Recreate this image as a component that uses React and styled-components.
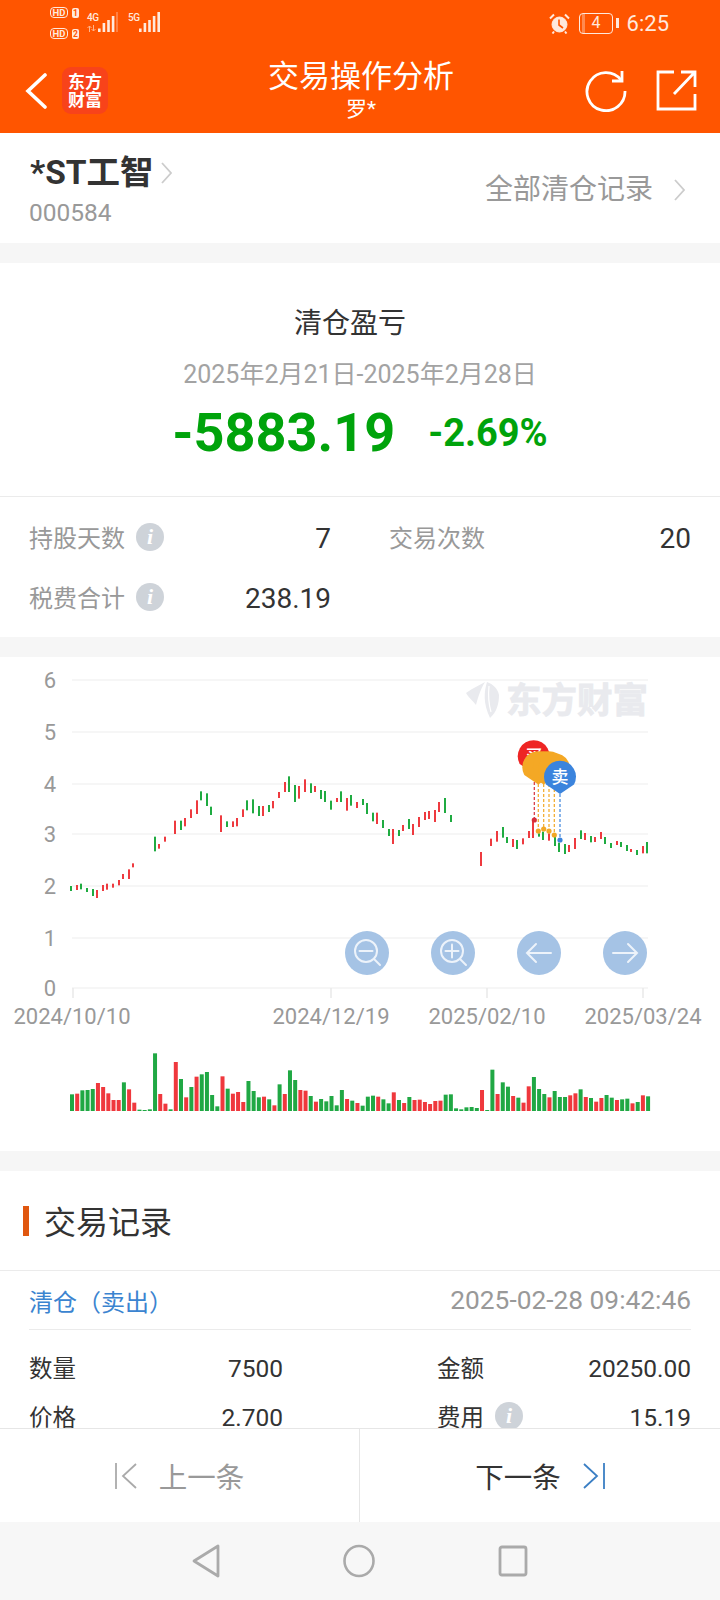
import styled, { createGlobalStyle } from 'styled-components'

const GlobalStyle = createGlobalStyle`
  html, body { margin: 0; padding: 0; background: #fff; }
  * { box-sizing: border-box; }
  body { font-family: Roboto, "Noto Sans CJK SC", sans-serif; }
`

const Page = styled.div`
  width: 720px;
  height: 1600px;
  display: flex;
  flex-direction: column;
  overflow: hidden;
  background: #fff;
`

/* header */
const Header = styled.header`
  height: 133px;
  flex: none;
  background: #ff5500;
  color: #fff;
`
const StatusBar = styled.div`
  height: 48px;
  padding: 7px 51px 0 50px;
  display: flex;
  justify-content: space-between;
  align-items: flex-start;
  color: #ffe9dd;
`
const StatusLeft = styled.div`
  display: flex;
  align-items: flex-start;
  gap: 8px;
`
const SimStack = styled.div`
  display: flex;
  flex-direction: column;
  gap: 10px;
`
const SimRow = styled.div`
  display: flex;
  align-items: center;
  gap: 4px;
`
const HdBadge = styled.span`
  width: 18px;
  height: 11px;
  border: 1px solid #ffe9dd;
  border-radius: 4px;
  font-size: 9.5px;
  font-weight: 700;
  line-height: 9px;
  text-align: center;
`
const SimNumber = styled.span`
  width: 7px;
  height: 10px;
  border-radius: 2px;
  background: #ffe9dd;
  color: #ff5500;
  font-size: 8.5px;
  font-weight: 700;
  line-height: 10px;
  text-align: center;
`
const Network = styled.div`
  display: flex;
  align-items: flex-end;
  height: 25px;
`
const NetStack = styled.div`
  width: 11px;
  height: 25px;
  padding-top: 6px;
  display: flex;
  flex-direction: column;
  justify-content: space-between;
`
const NetLabel = styled.span`
  font-size: 10px;
  font-weight: 500;
  line-height: 9px;
  letter-spacing: -0.5px;
`
const StatusRight = styled.div`
  display: flex;
  align-items: center;
  margin-top: 5px;
  height: 22px;
`
const Battery = styled.span`
  width: 34px;
  height: 21px;
  margin-left: 9px;
  border: 1.5px solid #ffe9dd;
  border-radius: 4px;
  background: linear-gradient(to right, transparent 2px, #ff8a50 2px, #ff8a50 5px, transparent 5px);
  font-size: 16px;
  line-height: 18px;
  text-align: center;
`
const BatteryNub = styled.span`
  width: 2.5px;
  height: 10px;
  margin-left: 3px;
  background: #ffe9dd;
`
const Clock = styled.span`
  margin-left: 8px;
  font-size: 22px;
`
const NavBar = styled.div`
  height: 85px;
  padding: 0 23px 0 25px;
  display: grid;
  grid-template-columns: 1fr auto 1fr;
  align-items: center;
`
const NavLeft = styled.div`
  display: flex;
  align-items: center;
  gap: 14px;
`
const Logo = styled.div`
  width: 46px;
  height: 47px;
  border-radius: 9px;
  background: #f8431a;
  font-size: 17px;
  font-weight: 700;
  line-height: 18px;
  padding-top: 6px;
  text-align: center;
`
const TitleStack = styled.div`
  display: flex;
  flex-direction: column;
  align-items: center;
  padding-bottom: 2px;
`
const Title = styled.div`
  font-size: 31px;
  line-height: 38px;
`
const SubTitle = styled.div`
  margin-top: 1px;
  font-size: 21px;
  line-height: 24px;
`
const NavRight = styled.div`
  display: flex;
  justify-content: flex-end;
  align-items: center;
  gap: 29px;
`

/* scrolling body */
const Main = styled.main`
  flex: 1;
  min-height: 0;
  overflow: hidden;
  background: #f6f6f6;
  display: flex;
  flex-direction: column;
  gap: 20px;
`
const Card = styled.section`
  background: #fff;
  flex: none;
`
const StockCard = styled(Card)`
  height: 110px;
  padding: 20px 35px 0 30px;
  display: flex;
  justify-content: space-between;
  align-items: flex-start;
`
const StockName = styled.div`
  display: flex;
  align-items: center;
  gap: 7px;
  font-size: 33.5px;
  font-weight: 700;
  line-height: 40px;
  color: #333;
`
const StockCode = styled.div`
  margin-top: 5px;
  margin-left: -1px;
  font-size: 24.5px;
  line-height: 30px;
  color: #999;
`
const AllRecords = styled.div`
  display: flex;
  align-items: center;
  gap: 21px;
  margin-top: 18px;
  font-size: 28px;
  line-height: 38px;
  color: #999;
`
const Summary = styled.div`
  height: 234px;
  padding-top: 43px;
  display: flex;
  flex-direction: column;
  align-items: center;
  border-bottom: 1px solid #ebebeb;
`
const SummaryTitle = styled.div`
  margin-right: 20px;
  font-size: 28px;
  line-height: 36px;
  color: #333;
`
const SummaryDate = styled.div`
  margin-top: 17px;
  font-size: 25px;
  line-height: 32px;
  color: #a3a3a3;
`
const ProfitRow = styled.div`
  display: flex;
  align-items: center;
  gap: 33px;
  margin-top: 12px;
  color: #00a30b;
  font-weight: 700;
  line-height: 60px;
`
const ProfitMain = styled.span`
  font-size: 54px;
`
const ProfitRate = styled.span`
  font-size: 38px;
`
const StatGrid = styled.div`
  height: 140px;
  padding: 11px 29px 9px;
  display: grid;
  grid-template-columns: 302px 302px;
  grid-auto-rows: 60px;
  column-gap: 58px;
`
const Stat = styled.div`
  display: flex;
  align-items: center;
  justify-content: space-between;
`
const StatLabel = styled.span`
  display: flex;
  align-items: center;
  gap: 11px;
  padding-bottom: 3px;
  font-size: 24px;
  color: #999;
`
const StatValue = styled.span`
  font-size: 28px;
  color: #333;
`
const InfoDot = styled.i`
  width: 28px;
  height: 28px;
  border-radius: 50%;
  background: #ced3d9;
  color: #fff;
  font-family: "Liberation Serif", serif;
  font-size: 22px;
  font-weight: 700;
  font-style: italic;
  line-height: 28px;
  text-align: center;
`

/* chart */
const ChartCard = styled(Card)`
  position: relative;
  height: 494px;
`
const ChartSvg = styled.svg`
  display: block;
`
const AxisText = styled.text`
  font-family: Roboto, sans-serif;
  font-size: 22px;
  fill: #999;
  text-anchor: middle;
`
const Watermark = styled.text`
  font-family: "Noto Sans CJK SC", sans-serif;
  font-size: 35.5px;
  font-weight: 700;
  fill: #e9eaee;
  stroke: #e9eaee;
  stroke-width: 0.8px;
`
const PinText = styled.text`
  font-family: "Noto Sans CJK SC", sans-serif;
  font-size: 17px;
  font-weight: 500;
  fill: #fff;
  text-anchor: middle;
`
const ChartControls = styled.div`
  position: absolute;
  left: 345px;
  top: 274px;
  display: flex;
  gap: 42px;
`
const RoundButton = styled.button`
  width: 44px;
  height: 44px;
  padding: 0;
  border: none;
  border-radius: 50%;
  background: #a5c3e5;
  display: flex;
  align-items: center;
  justify-content: center;
`

/* records */
const RecordsCard = styled(Card)`
  flex: 1;
  min-height: 0;
  overflow: hidden;
`
const SectionHead = styled.div`
  height: 100px;
  padding: 35px 0 0 23px;
  display: flex;
  align-items: flex-start;
  gap: 15px;
  border-bottom: 1px solid #ebebeb;
`
const AccentBar = styled.span`
  width: 6px;
  height: 30px;
  background: #e0570f;
`
const SectionTitle = styled.div`
  margin-top: 2px;
  font-size: 32px;
  line-height: 30px;
  color: #333;
`
const RecordBody = styled.div`
  padding: 0 29px;
`
const RecordHead = styled.div`
  height: 59px;
  display: flex;
  justify-content: space-between;
  align-items: center;
  border-bottom: 1px solid #ebebeb;
`
const RecordKind = styled.span`
  font-size: 24px;
  color: #3b84d0;
`
const RecordTime = styled.span`
  font-size: 26.3px;
  color: #999;
`
const RecordGrid = styled.div`
  padding-top: 14px;
  display: grid;
  grid-template-columns: 254px 254px;
  grid-auto-rows: 49px;
  column-gap: 154px;
`
const RecordCell = styled.div`
  display: flex;
  justify-content: space-between;
  align-items: center;
  font-size: 24.5px;
  color: #333;
`
const RecordLabel = styled.span`
  display: flex;
  align-items: center;
  gap: 11px;
  padding-bottom: 3px;
  font-size: 23.5px;
`

/* footer */
const Pager = styled.footer`
  height: 94px;
  flex: none;
  display: grid;
  grid-template-columns: 1fr 1fr;
  background: #fff;
  border-top: 1px solid #e6e6e6;
`
const PagerButton = styled.div`
  display: flex;
  align-items: center;
  justify-content: center;
  gap: 22px;
  font-size: 28.5px;
  color: ${p => (p.$disabled ? '#999' : '#333')};
  border-right: ${p => (p.$disabled ? '1px solid #e6e6e6' : 'none')};
`
const SystemNav = styled.nav`
  height: 78px;
  flex: none;
  display: flex;
  align-items: center;
  justify-content: center;
  gap: 123px;
  background: #f7f7f7;
`

const green = '#1fab41'
const red = '#ee3a3f'

// candles as [x, top, bottom, g/r], read at 3x then scaled down
const candlesA = [
  [213,708,723,'g'],[231,705,720,'r'],[243,701,718,'g'],[261,714,726,'g'],[279,717,738,'g'],[291,720,744,'r'],
  [309,705,723,'r'],[321,701,719,'r'],[339,701,713,'r'],[357,690,706,'r'],[369,672,687,'r'],[387,658,687,'r'],
  [399,640,652,'r'],[465,560,604,'g'],[477,582,596,'r'],[495,560,575,'r'],[525,512,552,'r'],[543,512,540,'g'],
  [555,504,529,'r'],[573,478,504,'r'],[591,451,492,'r'],[603,424,451,'g'],[621,430,468,'g'],[633,470,495,'g'],
  [663,496,546,'r'],[681,514,531,'g'],[699,514,531,'r'],[711,504,529,'r'],[729,478,501,'r'],[741,451,481,'g'],
  [759,448,490,'g'],[777,468,498,'g'],[789,468,498,'r'],[807,465,486,'g'],[819,453,475,'r'],[837,426,444,'r'],
  [855,396,426,'r'],[867,379,426,'g'],[885,405,456,'g'],[897,408,446,'r'],[915,388,426,'r'],[933,400,429,'g'],
  [945,408,426,'r'],[963,420,447,'g'],[975,423,456,'g'],[993,452,479,'g'],[1011,444,456,'r'],[1023,424,456,'g'],
  [1041,444,482,'r'],[1053,435,467,'g'],[1071,456,474,'r'],
]
const candlesB = [
  [9,447,465,'g'],[21,459,492,'g'],[39,488,514,'g'],[51,488,522,'r'],[69,510,534,'g'],[87,537,558,'g'],
  [99,537,582,'r'],[117,540,558,'g'],[129,525,543,'r'],[147,507,537,'g'],[159,522,555,'r'],[177,501,531,'r'],
  [195,486,510,'r'],[207,483,507,'r'],[225,480,516,'r'],[237,456,486,'r'],[255,444,489,'g'],[273,495,516,'g'],
  [363,606,648,'r'],[393,566,588,'r'],[411,543,575,'r'],[429,531,563,'g'],[441,561,579,'g'],[459,567,591,'r'],
  [471,570,597,'g'],[489,565,583,'r'],[507,543,564,'r'],[519,510,564,'r'],[537,550,560,'g'],[549,545,570,'g'],
  [567,550,572,'r'],[585,560,588,'g'],[597,578,606,'g'],[615,582,612,'g'],[627,585,606,'r'],[645,564,597,'r'],
  [663,541,567,'g'],[675,549,570,'r'],[693,558,577,'g'],[705,561,576,'r'],[723,546,567,'r'],[735,561,582,'g'],
  [753,579,594,'g'],[771,573,585,'r'],[783,576,591,'g'],[801,585,603,'g'],[813,597,606,'r'],[831,600,615,'g'],
  [849,588,610,'r'],[861,576,610,'g'],
]
const candles = [
  ...candlesA.map(([x, t, b, c]) => [x / 3, 650 + t / 3, 650 + b / 3, c]),
  ...candlesB.map(([x, t, b, c]) => [360 + x / 3, 650 + t / 3, 650 + b / 3, c]),
]

// volume bars, top edge at 3x
const volumes = [
  [1333,'g'],[1331,'r'],[1321,'g'],[1320,'g'],[1317,'g'],[1299,'r'],[1311,'r'],[1330,'r'],[1350,'r'],[1350,'r'],
  [1297,'g'],[1318,'r'],[1358,'r'],[1379,'g'],[1380,'g'],[1378,'g'],[1210,'g'],[1332,'r'],[1361,'r'],[1378,'g'],
  [1236,'r'],[1287,'g'],[1342,'r'],[1311,'g'],[1280,'r'],[1273,'g'],[1266,'g'],[1335,'g'],[1369,'g'],[1279,'r'],
  [1316,'g'],[1331,'r'],[1326,'r'],[1356,'r'],[1293,'g'],[1323,'g'],[1342,'g'],[1340,'r'],[1348,'g'],[1366,'r'],
  [1303,'g'],[1332,'r'],[1261,'g'],[1290,'g'],[1320,'r'],[1322,'r'],[1338,'g'],[1355,'r'],[1347,'g'],[1354,'g'],
  [1338,'g'],[1366,'g'],[1320,'g'],[1347,'r'],[1352,'g'],[1359,'r'],
  [1367,'g'],[1340,'g'],[1337,'g'],[1340,'r'],[1348,'g'],[1360,'g'],[1327,'r'],[1350,'g'],[1359,'r'],[1341,'g'],
  [1350,'r'],[1349,'r'],[1356,'r'],[1362,'r'],[1353,'r'],[1352,'r'],[1334,'g'],[1333,'g'],[1375,'g'],[1378,'g'],
  [1372,'g'],[1371,'g'],[1374,'g'],[1320,'r'],[1380,'g'],[1259,'g'],[1332,'r'],[1297,'g'],[1310,'g'],[1338,'r'],
  [1343,'g'],[1358,'r'],[1309,'r'],[1281,'g'],[1317,'g'],[1332,'g'],[1342,'r'],[1323,'g'],[1341,'g'],[1341,'g'],
  [1336,'r'],[1330,'r'],[1318,'g'],[1341,'r'],[1344,'g'],[1355,'r'],[1344,'r'],[1335,'g'],[1343,'g'],[1350,'r'],
  [1348,'g'],[1346,'g'],[1360,'r'],[1356,'g'],[1336,'r'],[1339,'g'],
]

const gridLines = [
  [6, 680], [5, 732], [4, 784], [3, 834], [2, 886], [1, 938], [0, 988],
]
const ticks = [
  [72, 73, '2024/10/10'], [331, 331, '2024/12/19'], [487, 487, '2025/02/10'], [643, 643, '2025/03/24'],
]

const pinPath = (cx, cy) =>
  `M${cx - 14} ${cy + 8} A16 16 0 1 1 ${cx + 14} ${cy + 8} L${cx} ${cy + 17.5} Z`

const trades = [
  { x: 534.3, dot: 820, top: 772, color: '#d62f3a' },
  { x: 538.3, dot: 831, top: 784, color: '#f2a825' },
  { x: 543.7, dot: 829, top: 784, color: '#f2a825' },
  { x: 549, dot: 831, top: 784, color: '#f2a825' },
  { x: 554.3, dot: 835, top: 784, color: '#f2a825' },
  { x: 560, dot: 840, top: 794, color: '#3b84dd' },
]

function Chart() {
  return (
    <ChartSvg width="720" height="494" viewBox="0 657 720 494">
      {gridLines.map(([n, y]) => (
        <g key={n}>
          <line x1="72" x2="648" y1={y} y2={y} stroke="#f3f3f3" strokeWidth="1.5" />
          <AxisText x="50" y={y + 8}>{n}</AxisText>
        </g>
      ))}
      {ticks.map(([lx, tx, label]) => (
        <g key={label}>
          <line x1={tx} x2={tx} y1="988" y2="998" stroke="#e8e8e8" strokeWidth="1.5" />
          <AxisText x={lx} y="1024">{label}</AxisText>
        </g>
      ))}

      <path
        d="M466 693 C473 688 480 685 485 682 C480 690 478 698 476 705 C473 701 468 697 466 693 Z M487 682 C484 692 483 703 490 718 C497 712 499 703 499 695 C498 689 493 684 487 682 Z"
        fill="#e9eaee"
      />
      <path d="M489 686 C488 696 489 705 491 712" fill="none" stroke="#fff" strokeWidth="1.2" />
      <Watermark x="506" y="713">东方财富</Watermark>

      {candles.map(([x, t, b, c], i) => (
        <rect key={i} x={x - 1} y={t} width="2" height={b - t} fill={c === 'g' ? green : red} />
      ))}

      {trades.map(t => (
        <g key={t.x}>
          <line x1={t.x} x2={t.x} y1={t.top} y2={t.dot} stroke={t.color} strokeWidth="1.2" strokeDasharray="3 2" />
          <circle cx={t.x} cy={t.dot} r="2.6" fill={t.color} />
        </g>
      ))}
      <path d={pinPath(533.7, 756)} fill="#ee2524" />
      <PinText x="533.7" y="762">买</PinText>
      <path d={pinPath(538.3, 767)} fill="#f4a825" />
      <path d={pinPath(543.7, 767)} fill="#f4a825" />
      <path d={pinPath(549, 767)} fill="#f4a825" />
      <path d={pinPath(554.3, 769)} fill="#f4a825" />
      <path d={pinPath(560, 776.5)} fill="#3b84dd" />
      <PinText x="560" y="782.5">卖</PinText>

      {volumes.map(([top, c], i) => (
        <rect
          key={i}
          x={70 + i * 5.19}
          y={650 + top / 3}
          width="4"
          height={1111 - (650 + top / 3)}
          fill={c === 'g' ? '#20a844' : '#ef383d'}
        />
      ))}
    </ChartSvg>
  )
}

const ChevronRight = ({ w = 11, h = 22, color = '#ccc' }) => (
  <svg width={w} height={h} viewBox="0 0 11 22" fill="none" stroke={color} strokeWidth="1.8">
    <path d="M1 1 L10 11 L1 21" />
  </svg>
)

const ZoomIcon = ({ plus }) => (
  <svg width="36" height="36" viewBox="0 0 36 36" fill="none" stroke="#edf3fa" strokeWidth="2" strokeLinecap="round">
    <circle cx="17" cy="16" r="11" />
    <path d="M10.5 16 H23.5" />
    {plus && <path d="M17 9.5 V22.5" />}
    <path d="M25 24 L31 30" />
  </svg>
)

const ArrowIcon = ({ right }) => (
  <svg width="28" height="24" viewBox="0 0 28 24" fill="none" stroke="#edf3fa" strokeWidth="2" strokeLinecap="round">
    {right ? <path d="M2 12 H26 M17 3 L26 12 L17 21" /> : <path d="M26 12 H2 M11 3 L2 12 L11 21" />}
  </svg>
)

// five bars; the last one is thin and faint on the 4G card
const SignalBars = ({ weak }) => (
  <svg width="22" height="20" viewBox="0 0 22 20" fill="#ffe9dd">
    <rect x="0" y="16.5" width="2.6" height="3.5" />
    <rect x="4.6" y="11" width="2.6" height="9" />
    <rect x="9.2" y="8" width="2.6" height="12" />
    <rect x="13.8" y="4" width="2.6" height="16" />
    <rect x="18.4" y="0" width={weak ? 1.2 : 2.6} height="20" opacity={weak ? 0.5 : 1} />
  </svg>
)

const DataArrows = () => (
  <svg width="9" height="7" viewBox="0 0 9 7" fill="none" stroke="#ffb48c" strokeWidth="1">
    <path d="M2.5 7 V1 M0.5 3 L2.5 1 L4.5 3 M6.5 0 V6 M4.5 4 L6.5 6 L8.5 4" />
  </svg>
)

export default function App() {
  return (
    <>
      <GlobalStyle />
      <Page>
        <Header>
          <StatusBar>
            <StatusLeft>
              <SimStack>
                <SimRow><HdBadge>HD</HdBadge><SimNumber>1</SimNumber></SimRow>
                <SimRow><HdBadge>HD</HdBadge><SimNumber>2</SimNumber></SimRow>
              </SimStack>
              <Network>
                <NetStack><NetLabel>4G</NetLabel><DataArrows /></NetStack>
                <SignalBars weak />
              </Network>
              <Network>
                <NetStack><NetLabel>5G</NetLabel></NetStack>
                <SignalBars />
              </Network>
            </StatusLeft>
            <StatusRight>
              <svg width="21" height="21" viewBox="0 0 21 21" fill="none" stroke="#ffe9dd">
                <circle cx="10.5" cy="11.5" r="7.5" fill="#ffe9dd" />
                <path d="M10 6.5 V12 L14 15" stroke="#ff5500" strokeWidth="1.6" />
                <path d="M1 5.5 L5 1.5 M20 5.5 L16 1.5 M5 18.5 L3.5 20.5 M16 18.5 L17.5 20.5" strokeWidth="2" />
              </svg>
              <Battery>4</Battery>
              <BatteryNub />
              <Clock>6:25</Clock>
            </StatusRight>
          </StatusBar>
          <NavBar>
            <NavLeft>
              <svg width="23" height="36" viewBox="0 0 23 36" fill="none" stroke="#fff" strokeWidth="3.6" strokeLinecap="round">
                <path d="M20 2 L3 18 L20 34" />
              </svg>
              <Logo>东方<br />财富</Logo>
            </NavLeft>
            <TitleStack>
              <Title>交易操作分析</Title>
              <SubTitle>罗*</SubTitle>
            </TitleStack>
            <NavRight>
              <svg width="42" height="42" viewBox="0 0 42 42" fill="none" stroke="#fff" strokeWidth="2.8">
                <path d="M36 10 A19 19 0 1 0 40 21" />
                <path d="M37 1 V11 H27" />
              </svg>
              <svg width="41" height="41" viewBox="0 0 41 41" fill="none" stroke="#fff" strokeWidth="2.8">
                <path d="M18 2 H2 V39 H39 V24" />
                <path d="M18 24 L38 3 M25 2 H39 V17" />
              </svg>
            </NavRight>
          </NavBar>
        </Header>

        <Main>
          <StockCard>
            <div>
              <StockName>*ST工智<ChevronRight /></StockName>
              <StockCode>000584</StockCode>
            </div>
            <AllRecords>全部清仓记录<ChevronRight /></AllRecords>
          </StockCard>

          <Card>
            <Summary>
              <SummaryTitle>清仓盈亏</SummaryTitle>
              <SummaryDate>2025年2月21日-2025年2月28日</SummaryDate>
              <ProfitRow>
                <ProfitMain>-5883.19</ProfitMain>
                <ProfitRate>-2.69%</ProfitRate>
              </ProfitRow>
            </Summary>
            <StatGrid>
              <Stat>
                <StatLabel>持股天数<InfoDot>i</InfoDot></StatLabel>
                <StatValue>7</StatValue>
              </Stat>
              <Stat>
                <StatLabel>交易次数</StatLabel>
                <StatValue>20</StatValue>
              </Stat>
              <Stat>
                <StatLabel>税费合计<InfoDot>i</InfoDot></StatLabel>
                <StatValue>238.19</StatValue>
              </Stat>
            </StatGrid>
          </Card>

          <ChartCard>
            <Chart />
            <ChartControls>
              <RoundButton><ZoomIcon /></RoundButton>
              <RoundButton><ZoomIcon plus /></RoundButton>
              <RoundButton><ArrowIcon /></RoundButton>
              <RoundButton><ArrowIcon right /></RoundButton>
            </ChartControls>
          </ChartCard>

          <RecordsCard>
            <SectionHead>
              <AccentBar />
              <SectionTitle>交易记录</SectionTitle>
            </SectionHead>
            <RecordBody>
              <RecordHead>
                <RecordKind>清仓（卖出）</RecordKind>
                <RecordTime>2025-02-28 09:42:46</RecordTime>
              </RecordHead>
              <RecordGrid>
                <RecordCell><RecordLabel>数量</RecordLabel>7500</RecordCell>
                <RecordCell><RecordLabel>金额</RecordLabel>20250.00</RecordCell>
                <RecordCell><RecordLabel>价格</RecordLabel>2.700</RecordCell>
                <RecordCell><RecordLabel>费用<InfoDot>i</InfoDot></RecordLabel>15.19</RecordCell>
              </RecordGrid>
            </RecordBody>
          </RecordsCard>
        </Main>

        <Pager>
          <PagerButton $disabled>
            <svg width="22" height="28" viewBox="0 0 22 28" fill="none" stroke="#aaa" strokeWidth="1.8">
              <path d="M1 1 V27 M21 2 L8 14 L21 26" />
            </svg>
            上一条
          </PagerButton>
          <PagerButton>
            下一条
            <svg width="22" height="28" viewBox="0 0 22 28" fill="none" stroke="#3b7fc4" strokeWidth="1.8">
              <path d="M21 1 V27 M1 2 L14 14 L1 26" />
            </svg>
          </PagerButton>
        </Pager>

        <SystemNav>
          <svg width="28" height="34" viewBox="0 0 28 34" fill="none" stroke="#aaa" strokeWidth="2.8" strokeLinejoin="round">
            <path d="M26 2 V32 L2 17 Z" />
          </svg>
          <svg width="32" height="34" viewBox="0 0 32 34" fill="none" stroke="#aaa" strokeWidth="2.6">
            <ellipse cx="16" cy="17" rx="14.5" ry="15" />
          </svg>
          <svg width="30" height="34" viewBox="0 0 30 34" fill="none" stroke="#aaa" strokeWidth="2.8" strokeLinejoin="round">
            <rect x="2" y="3" width="26" height="28" rx="2" />
          </svg>
        </SystemNav>
      </Page>
    </>
  )
}
